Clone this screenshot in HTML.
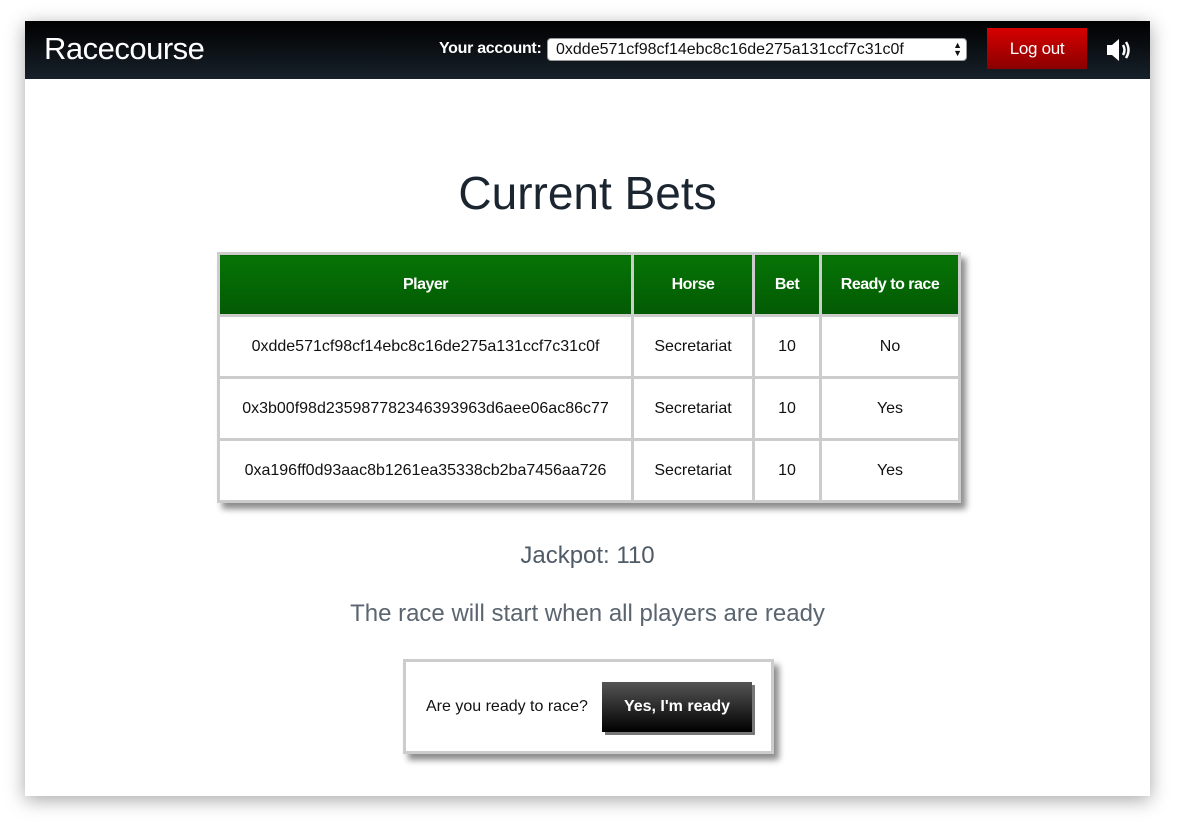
<!DOCTYPE html>
<html><head><style>
*{box-sizing:border-box;margin:0;padding:0}
body{width:1181px;height:836px;background:#fff;font-family:"Liberation Sans",sans-serif;position:relative;overflow:hidden}
.win{position:absolute;left:25px;top:21px;width:1125px;height:775px;background:#fff;box-shadow:0 4px 18px rgba(0,0,0,.35)}
.hdr{position:absolute;left:0;top:0;width:1125px;height:58px;background:linear-gradient(#000,#17212a)}
.logo{position:absolute;left:19px;top:10px;color:#fff;font-size:31px;letter-spacing:-0.5px}
.acc{position:absolute;left:414px;top:19px;color:#fff;font-size:16px;font-weight:bold;letter-spacing:-0.3px}
.sel{position:absolute;left:522px;top:17px;width:420px;height:23px;background:#fff;border:1px solid #999;border-radius:4px;font-size:16px;padding:2px 8px;color:#111}
.arr{position:absolute;right:4px;top:2px;font-size:9px;line-height:8px}
.lo{position:absolute;left:962px;top:7px;width:100px;height:41px;background:linear-gradient(#d60000,#8a0000);color:#fff;font-size:17px;text-align:center;line-height:41px;letter-spacing:-0.3px}
h1{position:absolute;left:0;width:1125px;top:145px;text-align:center;font-weight:normal;font-size:46px;color:#1a2530}
table{position:absolute;left:192px;top:231px;width:744px;border-collapse:collapse;border:3px solid #ccc;box-shadow:5px 6px 6px rgba(0,0,0,.45)}
td,th{border:3px solid #ccc;text-align:center;font-size:16px;height:62px;color:#111}
th{background:linear-gradient(#067406,#035a03);color:#fff;font-weight:bold;height:62px;letter-spacing:-0.5px}
.jp{position:absolute;left:0;width:1125px;top:521px;text-align:center;font-size:24px;color:#4f5b66}
.st{position:absolute;left:0;width:1125px;top:579px;text-align:center;font-size:24px;color:#5a6570}
.box{position:absolute;left:378px;top:638px;width:371px;height:95px;border:3px solid #ccc;box-shadow:5px 6px 6px rgba(0,0,0,.45);background:#fff}
.q{position:absolute;left:20px;top:36px;font-size:16px;color:#111}
.btn{position:absolute;left:196px;top:20px;width:150px;height:50px;background:linear-gradient(#555,#000);color:#fff;font-weight:bold;font-size:16px;text-align:center;line-height:50px;box-shadow:3px 3px 0 #777}
</style></head><body>
<div class="win">
<div class="hdr">
<div class="logo">Racecourse</div>
<div class="acc">Your account:</div>
<div class="sel">0xdde571cf98cf14ebc8c16de275a131ccf7c31c0f<span class="arr">▲<br>▼</span></div>
<div class="lo">Log out</div>
<svg style="position:absolute;left:1080px;top:16px" width="30" height="26" viewBox="0 0 30 26"><path d="M2 8h5l7-6v22l-7-6H2z" fill="#fff"/><path d="M18 8q3 5 0 10M21 5q5 8 0 16" stroke="#fff" stroke-width="2.5" fill="none"/></svg>
</div>
<h1>Current Bets</h1>
<table>
<tr><th style="width:414px">Player</th><th style="width:121px">Horse</th><th style="width:67px">Bet</th><th>Ready to race</th></tr>
<tr><td>0xdde571cf98cf14ebc8c16de275a131ccf7c31c0f</td><td>Secretariat</td><td>10</td><td>No</td></tr>
<tr><td>0x3b00f98d235987782346393963d6aee06ac86c77</td><td>Secretariat</td><td>10</td><td>Yes</td></tr>
<tr><td>0xa196ff0d93aac8b1261ea35338cb2ba7456aa726</td><td>Secretariat</td><td>10</td><td>Yes</td></tr>
</table>
<div class="jp">Jackpot: 110</div>
<div class="st">The race will start when all players are ready</div>
<div class="box"><div class="q">Are you ready to race?</div><div class="btn">Yes, I'm ready</div></div>
</div>
</body></html>
